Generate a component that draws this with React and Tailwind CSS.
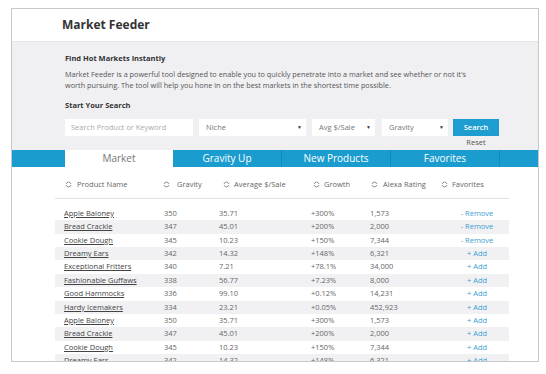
import React from "react";

const rows = [
  ["Apple Baloney", "350", "35.71", "+300%", "1,573", false],
  ["Bread Crackle", "347", "45.01", "+200%", "2,000", false],
  ["Cookie Dough", "345", "10.23", "+150%", "7,344", false],
  ["Dreamy Ears", "342", "14.32", "+148%", "6,321", true],
  ["Exceptional Fritters", "340", "7.21", "+78.1%", "34,000", true],
  ["Fashionable Guffaws", "338", "56.77", "+7.23%", "8,000", true],
  ["Good Hammocks", "336", "99.10", "+0.12%", "14,231", true],
  ["Hardy Icemakers", "334", "23.21", "+0.05%", "452,923", true],
  ["Apple Baloney", "350", "35.71", "+300%", "1,573", true],
  ["Bread Crackle", "347", "45.01", "+200%", "2,000", true],
  ["Cookie Dough", "345", "10.23", "+150%", "7,344", true],
  ["Dreamy Ears", "342", "14.32", "+148%", "6,321", true],
];

function SortIcon() {
  return (
    <svg width="7" height="7" viewBox="0 0 7 7" className="shrink-0">
      <path d="M1 3 A2.6 2.6 0 0 1 6 3" fill="none" stroke="#777" strokeWidth="0.8" />
      <path d="M6 4 A2.6 2.6 0 0 1 1 4" fill="none" stroke="#777" strokeWidth="0.8" />
    </svg>
  );
}

function Select({ label, w }) {
  return (
    <div className={`${w} h-[17px] bg-white flex items-center justify-between pl-[7px] pr-[4px] text-[#777]`}>
      <span>{label}</span>
      <span className="text-[5px] text-[#333]">▼</span>
    </div>
  );
}

const cols = "grid grid-cols-[109px_55px_92px_59px_75px_64px]";

export default function App() {
  return (
    <div
      className="w-[546px] h-[374px] bg-white pt-[8px] pl-[11px]"
      style={{ fontFamily: '"Open Sans", "Liberation Sans", sans-serif' }}
    >
      <div className="w-[528px] h-[354px] border border-[#c9c9c9] overflow-hidden flex flex-col">
        <div className="h-[33px] shrink-0 bg-white border-b border-[#e6e6e6] flex items-center pl-[50px]">
          <span className="text-[12px] font-bold text-[#333]">Market Feeder</span>
        </div>
        <div className="h-[108px] shrink-0 bg-[#f0f0f3] pl-[53px] pt-[11px] text-[7.5px] text-[#444] flex flex-col">
          <div className="h-[10px] leading-[10px] font-bold text-[#333]">Find Hot Markets Instantly</div>
          <div className="mt-[6px] leading-[11px] text-[#555] text-[7.3px]">
            <div className="whitespace-nowrap">
              Market Feeder is a powerful tool designed to enable you to quickly penetrate into a market and see whether or not it's
            </div>
            <div className="whitespace-nowrap">
              worth pursuing. The tool will help you hone in on the best markets in the shortest time possible.
            </div>
          </div>
          <div className="mt-[9px] h-[10px] leading-[10px] font-bold text-[#333]">Start Your Search</div>
          <div className="mt-[9px] flex items-start">
            <div className="w-[128px] h-[17px] bg-white flex items-center pl-[6px] text-[#aaa]">
              Search Product or Keyword
            </div>
            <div className="ml-[6px]">
              <Select label="Niche" w="w-[107px]" />
            </div>
            <div className="ml-[6px]">
              <Select label="Avg $/Sale" w="w-[63px]" />
            </div>
            <div className="ml-[7px]">
              <Select label="Gravity" w="w-[66px]" />
            </div>
            <div className="ml-[5px] flex flex-col items-center">
              <div className="w-[46px] h-[17px] bg-[#1d9dd0] text-white flex items-center justify-center font-semibold">
                Search
              </div>
              <div className="mt-[1px] leading-[10px] text-[#555]">Reset</div>
            </div>
          </div>
        </div>
        <div className="h-[17px] shrink-0 bg-[#1b9cce] flex pl-[53px] text-[10px] leading-[17px]">
          <div className="w-[108px] bg-white text-[#777] text-center">Market</div>
          <div className="w-[109px] text-white text-center border-r border-[#1789b6]">Gravity Up</div>
          <div className="w-[109px] text-white text-center border-r border-[#1789b6]">New Products</div>
          <div className="w-[109px] text-white text-center border-r border-[#1789b6]">Favorites</div>
        </div>
        <div className="ml-[43px] w-[454px] text-[7.5px] text-[#666]">
          <div className={`${cols} h-[32px] pt-[4px] items-center border-b border-[#e3e3e3]`}>
            <div className="flex items-center gap-[5px] pl-[10px]"><SortIcon />Product Name</div>
            <div className="flex items-center gap-[7px] -ml-[1px]"><SortIcon />Gravity</div>
            <div className="flex items-center gap-[4px] pl-[4px]"><SortIcon />Average $/Sale</div>
            <div className="flex items-center gap-[4px] pl-[2px]"><SortIcon />Growth</div>
            <div className="flex items-center gap-[5px] pl-[1px]"><SortIcon />Alexa Rating</div>
            <div className="flex items-center gap-[4px] -ml-[4px]"><SortIcon />Favorites</div>
          </div>
          <div className="mt-[8px]">
            {rows.map((r, i) => (
              <div
                key={i}
                className={`${cols} h-[13.36px] items-center ${i % 2 === 1 ? "bg-[#f1f1f4]" : "bg-white"}`}
              >
                <div className="pl-[9px] text-[#444] underline underline-offset-[1px] whitespace-nowrap">{r[0]}</div>
                <div>{r[1]}</div>
                <div>{r[2]}</div>
                <div>{r[3]}</div>
                <div>{r[4]}</div>
                <div className="text-center text-[#3a9ed0]">{r[5] ? "+ Add" : "- Remove"}</div>
              </div>
            ))}
          </div>
        </div>
      </div>
    </div>
  );
}
